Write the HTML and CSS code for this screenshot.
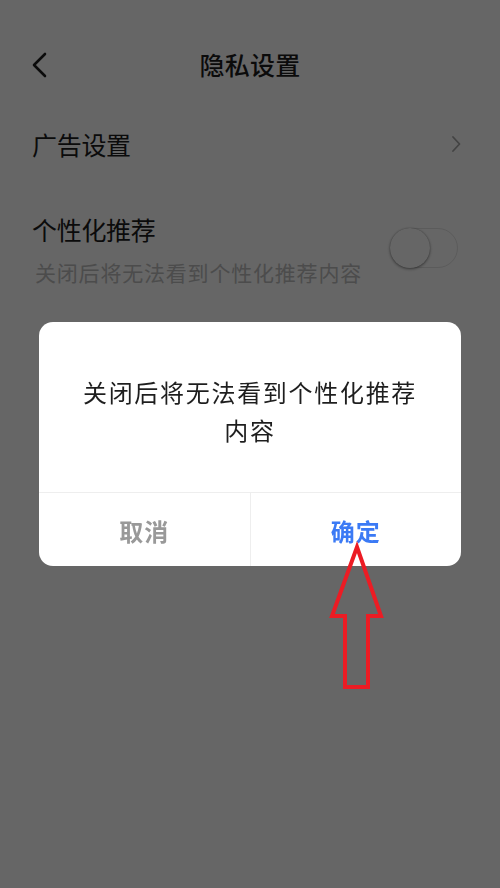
FILE: index.html
```html
<!DOCTYPE html>
<html lang="zh-CN">
<head>
<meta charset="utf-8">
<title>隐私设置</title>
<link rel="stylesheet" href="styles.css">
</head>
<body>
<div class="page">
  <header class="header">
    <svg class="back" width="18" height="26" viewBox="0 0 18 26"><path d="M14 2 L3 13 L14 24" fill="none" stroke="#1c1c1c" stroke-width="2.6" stroke-linecap="round" stroke-linejoin="round"/></svg>
    <h1 class="title">隐私设置</h1>
  </header>
  <div class="row row-link">
    <span class="row-title">广告设置</span>
    <svg class="chev" width="12" height="18" viewBox="0 0 12 18"><path d="M4 2 L10.5 9 L4 16" fill="none" stroke="#a8a8a8" stroke-width="1.8" stroke-linecap="round" stroke-linejoin="round"/></svg>
  </div>
  <div class="row row-switch">
    <div class="row-text">
      <span class="row-title">个性化推荐</span>
      <span class="row-sub">关闭后将无法看到个性化推荐内容</span>
    </div>
    <div class="switch"><span class="knob"></span></div>
  </div>
</div>
<div class="mask"></div>
<div class="dialog">
  <p class="dialog-msg">关闭后将无法看到个性化推荐内容</p>
  <div class="dialog-btns">
    <button class="btn btn-cancel">取消</button>
    <button class="btn btn-ok">确定</button>
  </div>
</div>
<svg class="arrow" width="500" height="888" viewBox="0 0 500 888"><polygon points="357,547 381,616 368,616 368,687 345,687 345,616 332,616" fill="none" stroke="#ec1c24" stroke-width="4" stroke-linejoin="miter"/></svg>
</body>
</html>
```
FILE: styles.css
```css
html, body {
  margin: 0;
  padding: 0;
}
body {
  width: 500px;
  height: 888px;
  background: #ffffff;
  font-family: "Noto Sans CJK SC", "Noto Sans", sans-serif;
  overflow: hidden;
  position: relative;
}
.page {
  padding: 30px 0 0;
}
.header {
  height: 68px;
  display: flex;
  align-items: center;
  justify-content: center;
  position: relative;
}
.back {
  position: absolute;
  left: 31px;
  top: 22px;
}
.title {
  margin: 0;
  font-size: 25px;
  font-weight: 500;
  color: #1c1c1c;
  letter-spacing: 0.3px;
}
.row {
  display: flex;
  align-items: center;
  justify-content: space-between;
  padding: 0 42px 0 32px;
}
.row-link {
  height: 92px;
}
.chev {
  margin-right: -3px;
}
.row-title {
  font-size: 25px;
  color: #1c1c1c;
  line-height: 34px;
  letter-spacing: -0.3px;
}
.row-switch {
  padding-top: 22px;
}
.row-text {
  display: flex;
  flex-direction: column;
  gap: 10px;
}
.row-sub {
  font-size: 21px;
  line-height: 32px;
  color: #bdbdbd;
  letter-spacing: 0.8px;
  padding-left: 3px;
}
.switch {
  width: 62px;
  height: 38px;
  border: 1px solid #e4e4e4;
  border-radius: 20px;
  background: #ffffff;
  position: relative;
  margin-bottom: 4px;
}
.knob {
  position: absolute;
  left: -5px;
  top: -1px;
  width: 40px;
  height: 40px;
  border-radius: 50%;
  background: #ffffff;
  box-shadow: 0 1px 3px rgba(0, 0, 0, 0.45), 0 0 1px rgba(0, 0, 0, 0.3);
}
.mask {
  position: fixed;
  inset: 0;
  background: rgba(0, 0, 0, 0.6);
}
.dialog {
  position: absolute;
  left: 39px;
  top: 322px;
  width: 422px;
  height: 244px;
  background: #ffffff;
  border-radius: 14px;
  display: flex;
  flex-direction: column;
  overflow: hidden;
}
.dialog-msg {
  flex: 1;
  margin: 0;
  padding: 51px 40px 0;
  font-size: 24px;
  line-height: 38px;
  letter-spacing: 1.7px;
  color: #1e1e1e;
  text-align: center;
}
.dialog-btns {
  height: 73px;
  display: flex;
  border-top: 1px solid #eeeeee;
}
.btn {
  flex: 1;
  border: 0;
  background: transparent;
  font-family: inherit;
  font-size: 24px;
  font-weight: 700;
  letter-spacing: 1px;
  padding: 2px 0 0;
}
.btn-cancel {
  color: #999999;
  border-right: 1px solid #eeeeee;
}
.btn-ok {
  color: #3b7af5;
}
.arrow {
  position: absolute;
  left: 0;
  top: 0;
  pointer-events: none;
}
```
